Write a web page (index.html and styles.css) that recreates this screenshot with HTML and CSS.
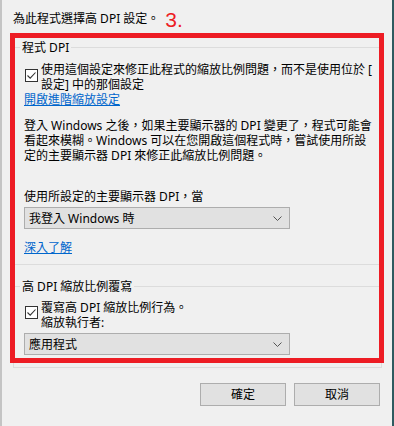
FILE: index.html
```html
<!DOCTYPE html>
<html lang="zh-Hant">
<head>
<meta charset="utf-8">
<link rel="stylesheet" href="styles.css">
</head>
<body>
<div class="window">
  <div class="title-row">
    <span class="title">為此程式選擇高 DPI 設定。</span>
    <span class="step">3.</span>
  </div>

  <fieldset class="group g1">
    <legend>程式 DPI</legend>
    <div class="check">
      <span class="box"><svg width="11" height="11" viewBox="0 0 11 11"><path d="M1.5 5.5 L4.2 8.2 L9.5 2.5" fill="none" stroke="#333" stroke-width="1.1"/></svg></span>
      <span class="check-text">使用這個設定來修正此程式的縮放比例問題，而不是使用位於 [<br>設定] 中的那個設定</span>
    </div>
    <a class="link" href="#">開啟進階縮放設定</a>
    <p class="para">登入 Windows 之後，如果主要顯示器的 DPI 變更了，程式可能會<br>看起來模糊。Windows 可以在您開啟這個程式時，嘗試使用所設<br>定的主要顯示器 DPI 來修正此縮放比例問題。</p>
    <p class="when">使用所設定的主要顯示器 DPI，當</p>
    <div class="select">
      <span>我登入 Windows 時</span>
      <svg width="9" height="5" viewBox="0 0 9 5"><path d="M0.5 0.5 L4.5 4.5 L8.5 0.5" fill="none" stroke="#555" stroke-width="1"/></svg>
    </div>
    <a class="link more" href="#">深入了解</a>
  </fieldset>

  <fieldset class="group g2">
    <legend>高 DPI 縮放比例覆寫</legend>
    <div class="check">
      <span class="box"><svg width="11" height="11" viewBox="0 0 11 11"><path d="M1.5 5.5 L4.2 8.2 L9.5 2.5" fill="none" stroke="#333" stroke-width="1.1"/></svg></span>
      <span class="check-text">覆寫高 DPI 縮放比例行為。<br>縮放執行者:</span>
    </div>
    <div class="select sel2">
      <span>應用程式</span>
      <svg width="9" height="5" viewBox="0 0 9 5"><path d="M0.5 0.5 L4.5 4.5 L8.5 0.5" fill="none" stroke="#555" stroke-width="1"/></svg>
    </div>
  </fieldset>

  <div class="buttons">
    <button class="btn">確定</button>
    <button class="btn">取消</button>
  </div>

  <div class="annot"></div>
</div>
</body>
</html>
```

FILE: styles.css
```css
html, body {
  margin: 0;
  padding: 0;
  background: #f0f0f0;
}
body {
  font-family: "Noto Sans", "Noto Sans CJK TC", sans-serif;
  font-size: 12px;
  line-height: 15px;
  color: #000;
}
.window {
  position: relative;
  width: 394px;
  height: 426px;
  box-sizing: border-box;
  border-left: 2px solid #c4c4c4;
  border-right: 2px solid #2f5b60;
  overflow: hidden;
}
.title-row {
  display: flex;
  align-items: flex-start;
  height: 40px;
  box-sizing: border-box;
  padding: 7px 0 0 11px;
}
.title {
  margin-top: 4px;
  line-height: 16px;
}
.step {
  margin-left: 6px;
  font-family: "Liberation Sans", "Noto Sans", sans-serif;
  font-size: 21px;
  line-height: 25px;
  color: #ed1c24;
}
.group {
  margin: 0 0 0 11px;
  width: 369px;
  box-sizing: border-box;
  border: 1px solid #dcdcdc;
  padding: 7px 0 9px 6px;
  min-width: 0;
}
.group legend {
  padding: 0 2px;
  line-height: 15px;
}
.g2 {
  margin-top: 14px;
  padding-top: 6px;
  padding-bottom: 12px;
}
.check {
  display: flex;
  align-items: flex-start;
  margin-left: 5px;
}
.box {
  flex: none;
  width: 13px;
  height: 13px;
  box-sizing: border-box;
  border: 1px solid #333;
  background: #fff;
  margin-top: 7px;
  display: flex;
  align-items: center;
  justify-content: center;
}
.g2 .box {
  margin-top: 6px;
}
.check-text {
  margin-left: 3px;
  white-space: nowrap;
}
.link {
  display: inline-block;
  margin-left: 4px;
  color: #0066cc;
  text-decoration: underline;
}
.para {
  margin: 11px 0 0 4px;
  white-space: nowrap;
}
.when {
  margin: 26px 0 0 4px;
}
.select {
  margin: 3px 0 0 4px;
  width: 266px;
  height: 22px;
  box-sizing: border-box;
  border: 1px solid #adadad;
  background: #e1e1e1;
  display: flex;
  align-items: center;
  justify-content: space-between;
  padding: 0 7px 0 4px;
}
.sel2 {
  margin-top: 3px;
}
.more {
  margin-top: 11px;
}
.buttons {
  display: flex;
  justify-content: flex-end;
  gap: 8px;
  padding-right: 12px;
  margin-top: 15px;
}
.btn {
  width: 86px;
  height: 23px;
  box-sizing: border-box;
  border: 1px solid #adadad;
  background: #e1e1e1;
  font-family: "Noto Sans", "Noto Sans CJK TC", sans-serif;
  font-size: 12px;
  line-height: 15px;
  color: #000;
  padding: 0;
  border-radius: 0;
}
.annot {
  position: absolute;
  left: 8px;
  top: 33px;
  width: 374px;
  height: 330px;
  box-sizing: border-box;
  border: 5px solid #ed1c24;
}
```
